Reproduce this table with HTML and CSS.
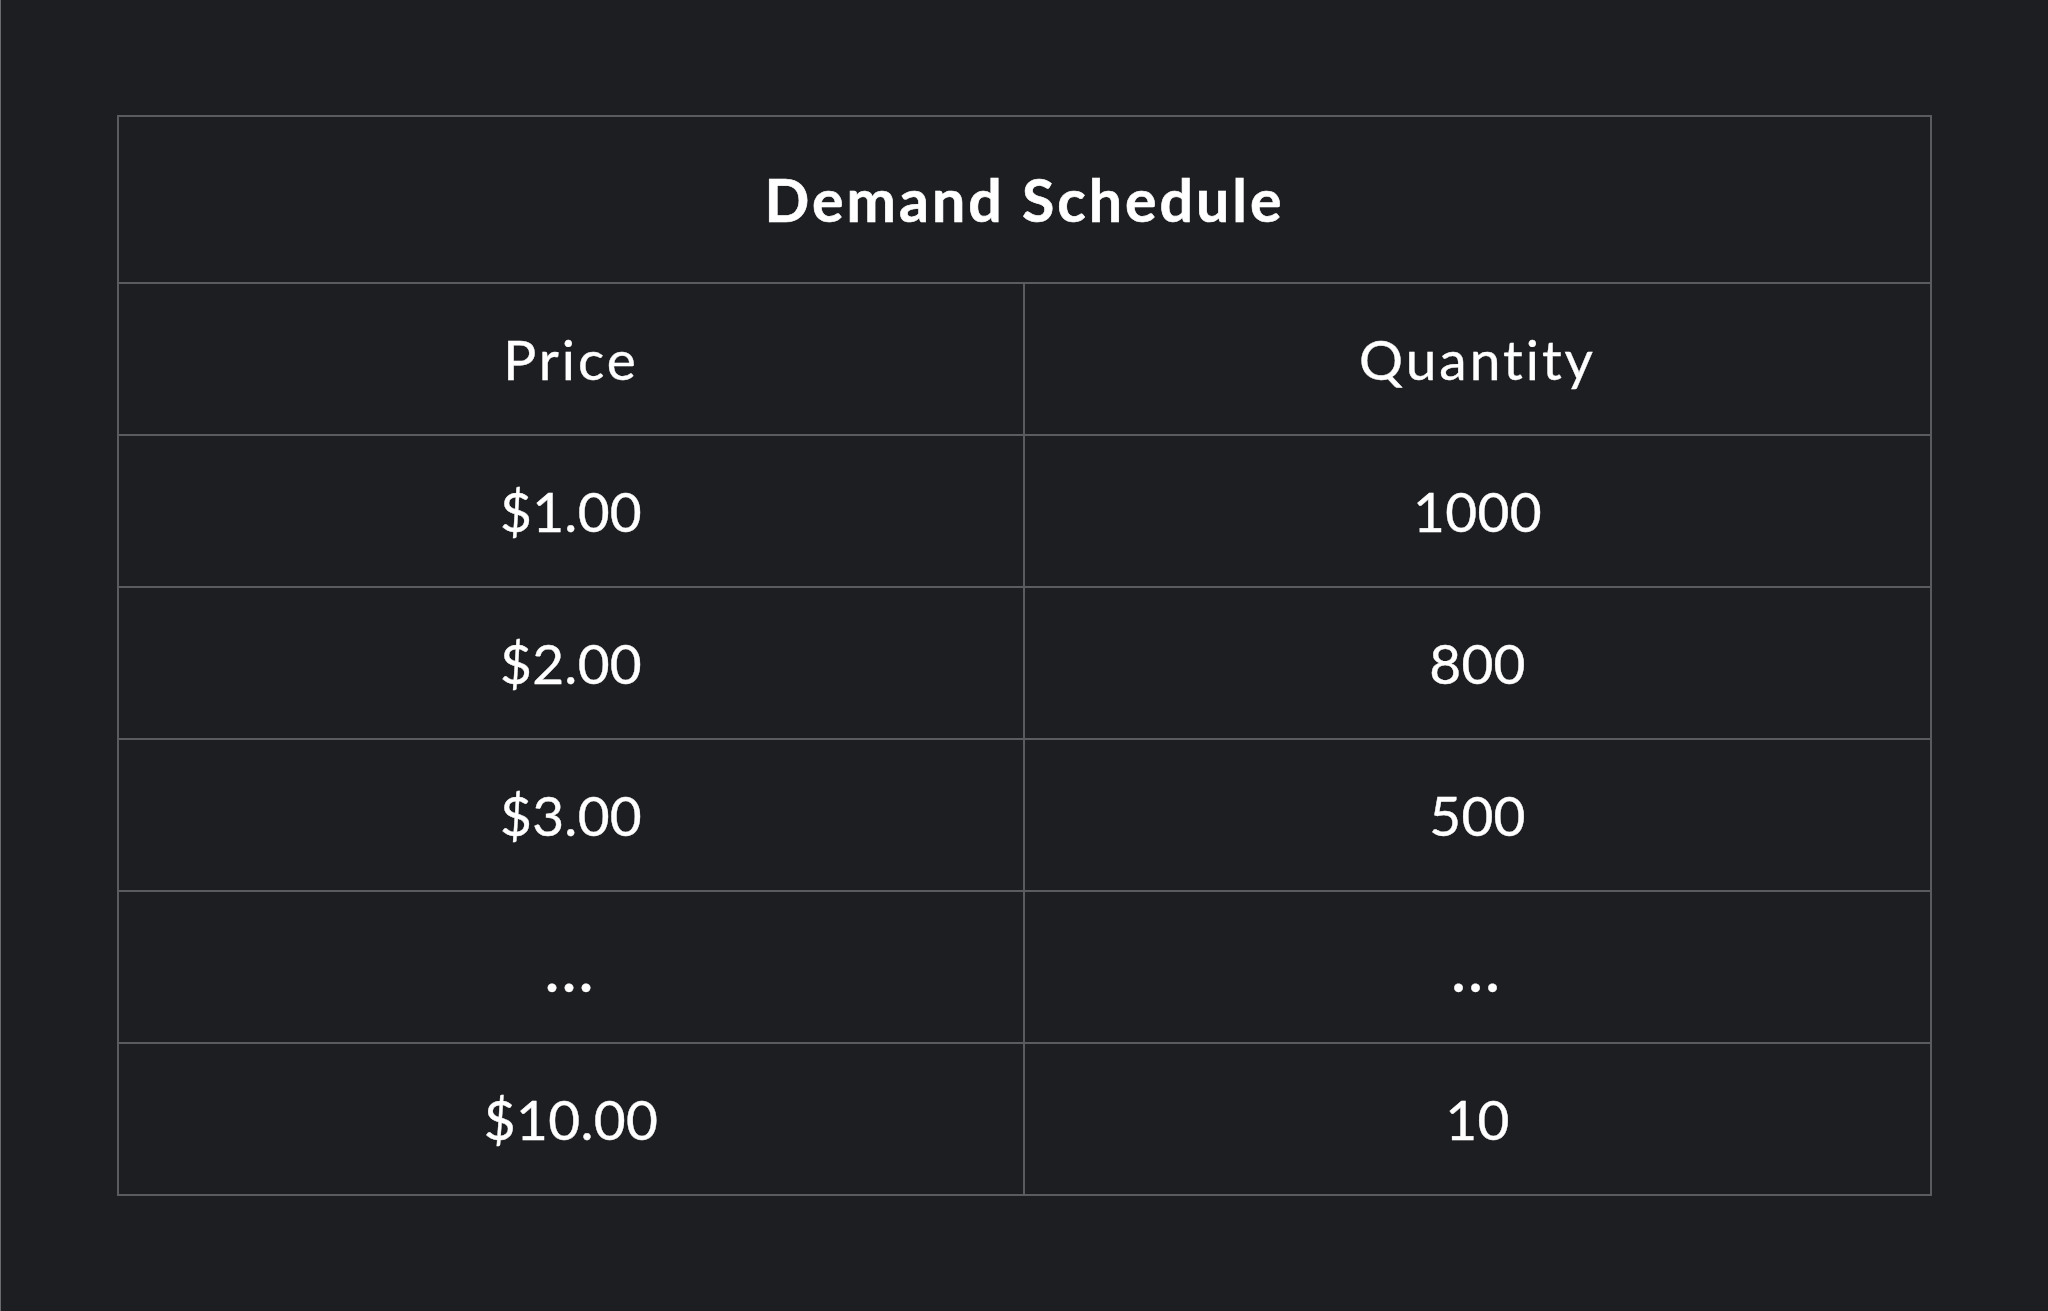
FILE: index.html
```html
<!DOCTYPE html>
<html lang="en">
<head>
<meta charset="utf-8">
<title>Demand Schedule</title>
<link rel="stylesheet" href="styles.css">
</head>
<body>
<main class="page">
  <section class="schedule">
    <div class="title">Demand Schedule</div>
    <div class="grid">
      <div class="cell head">Price</div>
      <div class="cell head">Quantity</div>
      <div class="cell">$1.00</div>
      <div class="cell">1000</div>
      <div class="cell">$2.00</div>
      <div class="cell">800</div>
      <div class="cell">$3.00</div>
      <div class="cell">500</div>
      <div class="cell dots">...</div>
      <div class="cell dots">...</div>
      <div class="cell">$10.00</div>
      <div class="cell">10</div>
    </div>
  </section>
</main>
</body>
</html>
```

FILE: styles.css
```css
html, body {
  margin: 0;
  padding: 0;
  background: #1d1e21;
}

.page {
  box-sizing: border-box;
  width: 2048px;
  height: 1311px;
  padding: 115px 116px 0 116px;
  border-left: 1px solid #6a6b6e;
  font-family: Lato, "Open Sans", sans-serif;
  color: #ffffff;
}

.schedule {
  border: 2px solid #5a5b5e;
  width: 1815px;
  box-sizing: border-box;
}

.title {
  height: 165px;
  display: flex;
  align-items: center;
  justify-content: center;
  font-weight: 700;
  font-size: 59px;
  letter-spacing: 3px;
  border-bottom: 2px solid #5a5b5e;
  -webkit-text-stroke: 0.6px #ffffff;
}

.grid {
  display: grid;
  grid-template-columns: 904px 1fr;
  grid-auto-rows: 150px;
  row-gap: 2px;
  background: #5a5b5e;
  column-gap: 2px;
}

.cell {
  background: #1d1e21;
  display: flex;
  align-items: center;
  justify-content: center;
  font-size: 55px;
  letter-spacing: 0.3px;
  -webkit-text-stroke: 0.4px #ffffff;
}

.head {
  letter-spacing: 3px;
}

.dots {
  font-weight: 700;
  letter-spacing: 4px;
  padding-top: 8px;
}
```
